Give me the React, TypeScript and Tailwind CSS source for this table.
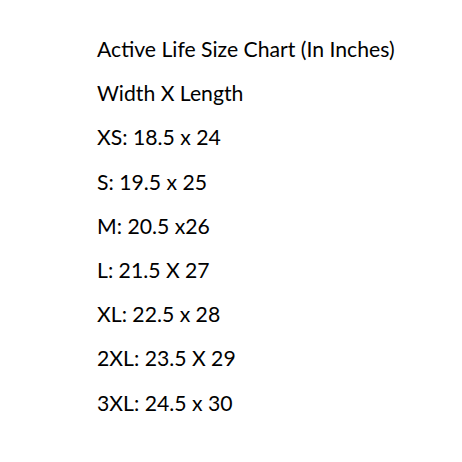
const lines = [
  "Active Life Size Chart (In Inches)",
  "Width X Length",
  "XS: 18.5 x 24",
  "S: 19.5 x 25",
  "M: 20.5 x26",
  "L: 21.5 X 27",
  "XL: 22.5 x 28",
  "2XL: 23.5 X 29",
  "3XL: 24.5 x 30",
];

export default function App() {
  return (
    <main className="w-[462px] h-[462px] bg-white pl-[97px] pt-[27px] font-['Lato',sans-serif] text-[21.2px] leading-[44.2px] text-black">
      {lines.map((line) => (
        <p key={line}>{line}</p>
      ))}
    </main>
  );
}
